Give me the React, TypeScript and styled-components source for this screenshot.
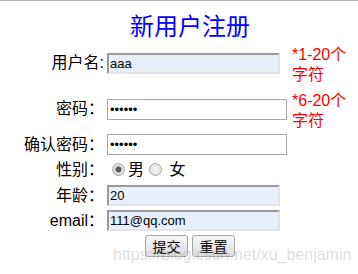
import React from "react";
import styled, { createGlobalStyle } from "styled-components";

const Global = createGlobalStyle`
  html, body { margin: 0; padding: 0; background: #fff; overflow: hidden; }
  body { font-family: "Liberation Sans", "Noto Sans CJK SC", sans-serif; }
`;

const Page = styled.div`
  position: relative;
  width: 358px;
  height: 274px;
  border-top: 1px solid #b4b4b4;
  box-sizing: border-box;
`;

const Form = styled.form`
  width: 340px;
  margin: 0 0 0 20px;
`;

const Title = styled.h2`
  margin: 0;
  padding-top: 12px;
  font-size: 24px;
  line-height: 28px;
  font-weight: normal;
  color: #0000ff;
  text-align: center;
`;

const Grid = styled.div`
  display: grid;
  grid-template-columns: 85px 182px 69px;
  grid-template-rows: 44px 44px 23px 24px 23px 23px 24px;
  column-gap: 2px;
  row-gap: 2px;
`;

const Label = styled.label`
  grid-column: 1;
  align-self: center;
  padding-right: 1px;
  font-size: 16px;
  line-height: 20px;
  color: #000;
  text-align: right;
  white-space: nowrap;
`;

const Field = styled.div`
  grid-column: 2;
  align-self: center;
  display: flex;
  align-items: center;
`;

const Hint = styled.div`
  grid-column: 3;
  align-self: start;
  padding: 4px 0 0 1px;
  font-size: 16px;
  line-height: 20px;
  color: #ff0000;
`;

const TextInput = styled.input`
  box-sizing: border-box;
  width: 173px;
  height: 21px;
  margin: 0;
  padding: 0 1px;
  border: 2px solid;
  border-color: #9b9b9b #e4e4e4 #e4e4e4 #9b9b9b;
  background: #e8f0fe;
  font-family: "Liberation Sans", sans-serif;
  font-size: 13px;
  color: #000;
  outline: none;
`;

const PasswordInput = styled.input`
  box-sizing: border-box;
  width: 180px;
  height: 21px;
  margin: 0;
  padding: 0 2px;
  border: 1px solid #a9a9a9;
  background: #fff;
  font-family: "Liberation Sans", sans-serif;
  font-size: 13px;
  color: #000;
  outline: none;
`;

const GenderCell = styled.div`
  grid-column: 2;
  align-self: center;
  font-size: 16px;
  line-height: 20px;
  color: #000;
  white-space: pre;
`;

const Radio = styled.input`
  appearance: none;
  -webkit-appearance: none;
  box-sizing: border-box;
  display: inline-block;
  width: 13px;
  height: 13px;
  margin: 0 3px 0 5px;
  vertical-align: -1px;
  border: 1px solid #a8a8a8;
  border-radius: 50%;
  background: radial-gradient(circle, #f2f2f2 0, #dedede 100%);
  &:checked {
    background: radial-gradient(circle, #5a5a5a 0, #5a5a5a 2.6px, #e2e2e2 3.4px, #d6d6d6 100%);
  }
`;

const ButtonRow = styled.div`
  grid-column: 1 / -1;
  align-self: center;
  display: flex;
  justify-content: center;
  gap: 4px;
`;

const Button = styled.button`
  box-sizing: border-box;
  width: 43px;
  height: 22px;
  margin: 0;
  padding: 0;
  border: 1px solid #a4a4a4;
  border-radius: 3px;
  background: linear-gradient(#f7f7f7, #dddddd);
  font-family: "Noto Sans CJK SC", sans-serif;
  font-size: 14px;
  line-height: 20px;
  color: #000;
`;

const Watermark = styled.div`
  position: absolute;
  left: 113px;
  top: 245px;
  font-family: "Liberation Sans", sans-serif;
  font-size: 16px;
  line-height: 18px;
  color: rgba(150, 150, 150, 0.32);
  white-space: nowrap;
  pointer-events: none;
`;

export default function App() {
  return (
    <>
      <Global />
      <Page>
        <Form onSubmit={(e) => e.preventDefault()}>
          <Title>新用户注册</Title>
          <Grid>
            <Label>用户名:</Label>
            <Field>
              <TextInput type="text" defaultValue="aaa" />
            </Field>
            <Hint>
              *1-20个
              <br />
              字符
            </Hint>

            <Label>密码：</Label>
            <Field>
              <PasswordInput type="password" defaultValue="123456" />
            </Field>
            <Hint>
              *6-20个
              <br />
              字符
            </Hint>

            <Label>确认密码：</Label>
            <Field>
              <PasswordInput type="password" defaultValue="123456" />
            </Field>

            <Label>性别：</Label>
            <GenderCell>
              <Radio type="radio" name="sex" defaultChecked />男<Radio type="radio" name="sex" /> 女
            </GenderCell>

            <Label>年龄：</Label>
            <Field>
              <TextInput type="text" defaultValue="20" />
            </Field>

            <Label>email：</Label>
            <Field>
              <TextInput type="text" defaultValue="111@qq.com" />
            </Field>

            <ButtonRow>
              <Button type="submit">提交</Button>
              <Button type="reset">重置</Button>
            </ButtonRow>
          </Grid>
        </Form>
        <Watermark>https://blog.csdn.net/xu_benjamin</Watermark>
      </Page>
    </>
  );
}
